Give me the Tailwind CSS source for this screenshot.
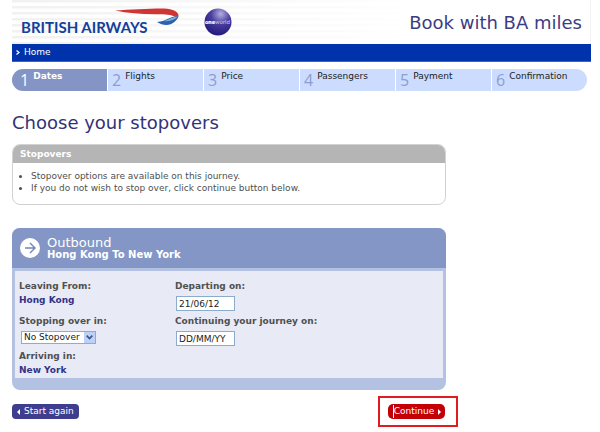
<!DOCTYPE html>
<html lang="en">
  <head>
    <meta charset="UTF-8" />
    <meta name="viewport" content="width=device-width, initial-scale=1.0" />
    <title>Book with BA miles</title>
    <script src="https://cdn.jsdelivr.net/npm/@tailwindcss/browser@4"></script>
  </head>
  <body class="bg-white pl-3 pr-[9px] font-['DejaVu_Sans',Verdana,sans-serif] text-[9px] text-[#505050]">
    <header
      class="flex h-11 items-center justify-between border-r border-[#f2f2f2] bg-[linear-gradient(to_right,transparent,white_70%),repeating-linear-gradient(#f1f1f1_0px,#f1f1f1_2px,white_3px,white_6px)] pr-2"
    >
      <div class="flex items-center">
        <a href="#" aria-label="British Airways home">
          <svg class="h-11 w-[180px]" viewBox="0 0 180 44">
            <text x="9" y="33" fill="#12409b" font-family="Lato, sans-serif" font-size="15" font-weight="700">BRITISH AIRWAYS</text>
            <path d="M103 10.5C118 9.5 140 8.3 152 8.5C161 8.7 167 12 166.5 16L165 18C161 15 156 14.2 148 14.2C132 14.5 117 13.5 103 10.5Z" fill="#cf3535" />
            <path d="M145 22C154 21.5 157 16.5 166.5 16C166 20 160 25 154.5 25C151 25 148 24 145 22Z" fill="#2a62ad" />
            <path d="M152 21C157 20 160 17 166 16.5C163 19 158 22 152 21Z" fill="#85aede" />
          </svg>
        </a>
        <svg class="ml-3 size-7" viewBox="0 0 28 28" role="img" aria-label="oneworld">
          <defs>
            <radialGradient id="globe" cx="0.6" cy="0.2" r="0.8">
              <stop offset="0" stop-color="#b4aee2" />
              <stop offset="0.45" stop-color="#4a3fa0" />
              <stop offset="1" stop-color="#241a7c" />
            </radialGradient>
          </defs>
          <circle cx="14" cy="14" r="13.5" fill="url(#globe)" />
          <text x="1" y="16" fill="#fff" font-family="Roboto, sans-serif" font-size="6"><tspan font-weight="900">one</tspan><tspan fill="#cfcbea">world</tspan></text>
        </svg>
      </div>
      <p class="text-[18px] text-[#3d3c83]">Book with BA miles</p>
    </header>

    <nav class="flex h-[18px] items-center border-b border-[#3d64c4] bg-[#0033ab] pl-1">
      <a href="#" class="flex items-center gap-1 text-white">
        <svg class="h-[5px] w-1" viewBox="0 0 4 5"><path d="M.5.5L3 2.5.5 4.5" fill="none" stroke="#fff" stroke-width="1.2" /></svg>
        Home
      </a>
    </nav>

    <!-- Booking steps -->
    <ol class="mt-[7px] mr-1 grid h-[22px] grid-cols-6 gap-px overflow-hidden rounded-full bg-white text-[#222]">
      <li class="flex gap-1 bg-[#8494c5] pl-2 font-bold text-white" aria-current="step">
        <span class="pt-[3px] font-['Open_Sans'] text-[16px] leading-4 font-normal">1</span><span class="pt-[2px] leading-[10px]">Dates</span>
      </li>
      <li class="flex gap-1 bg-[#ccdcff] pl-1">
        <span class="pt-[3px] font-['Open_Sans'] text-[16px] leading-4 text-[#8d9dcf]">2</span><span class="pt-[2px] leading-[10px]">Flights</span>
      </li>
      <li class="flex gap-1 bg-[#ccdcff] pl-1">
        <span class="pt-[3px] font-['Open_Sans'] text-[16px] leading-4 text-[#8d9dcf]">3</span><span class="pt-[2px] leading-[10px]">Price</span>
      </li>
      <li class="flex gap-1 bg-[#ccdcff] pl-1">
        <span class="pt-[3px] font-['Open_Sans'] text-[16px] leading-4 text-[#8d9dcf]">4</span><span class="pt-[2px] leading-[10px]">Passengers</span>
      </li>
      <li class="flex gap-1 bg-[#ccdcff] pl-1">
        <span class="pt-[3px] font-['Open_Sans'] text-[16px] leading-4 text-[#8d9dcf]">5</span><span class="pt-[2px] leading-[10px]">Payment</span>
      </li>
      <li class="flex gap-1 bg-[#ccdcff] pl-1">
        <span class="pt-[3px] font-['Open_Sans'] text-[16px] leading-4 text-[#8d9dcf]">6</span><span class="pt-[2px] leading-[10px]">Confirmation</span>
      </li>
    </ol>

    <main class="w-3/4">
      <h1 class="mt-5 text-[18px] leading-6 text-[#333278]">Choose your stopovers</h1>

      <section class="mt-[9px] overflow-hidden rounded-lg border border-[#d2d2d2]">
        <h2 class="bg-[#b5b5b5] px-[7px] leading-[18px] font-bold text-white">Stopovers</h2>
        <ul class="list-disc pt-[7px] pb-[10px] pl-[18px] leading-3">
          <li>Stopover options are available on this journey.</li>
          <li>If you do not wish to stop over, click continue button below.</li>
        </ul>
      </section>

      <form>
        <section class="mt-[23px] overflow-hidden rounded-lg bg-[#b3c2e2]">
          <div class="flex h-10 items-center gap-[7px] bg-[#8396c6] pl-2 text-white">
            <svg class="size-5" viewBox="0 0 20 20">
              <circle cx="10" cy="10" r="10" fill="#fff" />
              <path d="M5 10H15M10 5L15 10L10 15" fill="none" stroke="#7286bd" stroke-width="1.4" />
            </svg>
            <h2 class="pt-[2px] text-[13px] leading-3">Outbound<span class="block text-[10px] leading-3 font-bold">Hong Kong To New York</span></h2>
          </div>
          <div class="mx-[3px] mt-[3px] mb-3 grid grid-cols-[156px_1fr] bg-[#e8ebf5] pt-[9px] pr-1 pb-[2px] pl-1 leading-3">
            <div>
              <p class="font-bold">Leaving From:</p>
              <p class="mt-[2px] font-bold text-[#333388]">Hong Kong</p>
              <label for="stopover" class="mt-[9px] block font-bold">Stopping over in:</label>
              <div class="relative mt-1 ml-[2px] w-[75px]">
                <select id="stopover" class="block h-[13px] w-full appearance-none border border-[#8daccb] bg-white pl-[2px] text-[9px] leading-[11px] text-[#222]">
                  <option>No Stopover</option>
                </select>
                <span class="pointer-events-none absolute inset-y-px right-px flex w-[11px] items-center justify-center bg-[#bdd0f8]">
                  <svg class="h-[5px] w-[7px]" viewBox="0 0 7 5"><path d="M.7.7L3.5 3.5 6.3.7" fill="none" stroke="#3c5386" stroke-width="1.7" /></svg>
                </span>
              </div>
              <p class="mt-[6px] font-bold">Arriving in:</p>
              <p class="mt-[2px] font-bold text-[#333388]">New York</p>
            </div>
            <div>
              <label for="depart" class="block font-bold">Departing on:</label>
              <input id="depart" type="text" value="21/06/12" class="mt-[4px] ml-px block h-[15px] w-[59px] border border-[#8daccb] bg-white px-[2px] text-[9px] text-[#222]" />
              <label for="continue" class="mt-1 block font-bold">Continuing your journey on:</label>
              <input id="continue" type="text" value="DD/MM/YY" class="mt-[4px] ml-px block h-[15px] w-[59px] border border-[#8daccb] bg-white px-[2px] text-[9px] text-[#222]" />
            </div>
          </div>
        </section>

        <div class="-mr-3 mt-[6px] flex items-center justify-between">
          <button type="button" class="flex h-[15px] items-center gap-1 rounded-[4px] bg-[#3e3d8e] px-[5px] text-white">
            <svg class="h-[6px] w-[3px]" viewBox="0 0 3 6"><path d="M3 0V6L0 3Z" fill="#fff" /></svg>
            Start again
          </button>
          <div class="border-2 border-[#e01b22] py-[6px] pr-[11px] pl-2">
            <button type="submit" class="flex h-[15px] items-center gap-1 overflow-hidden rounded-[5px] bg-[#c40006] pr-1 pl-[5px] text-white">
              <span class="border-l border-white">Continue</span>
              <svg class="h-[6px] w-[3px]" viewBox="0 0 3 6"><path d="M0 0V6L3 3Z" fill="#fff" /></svg>
            </button>
          </div>
        </div>
      </form>
    </main>
  </body>
</html>
